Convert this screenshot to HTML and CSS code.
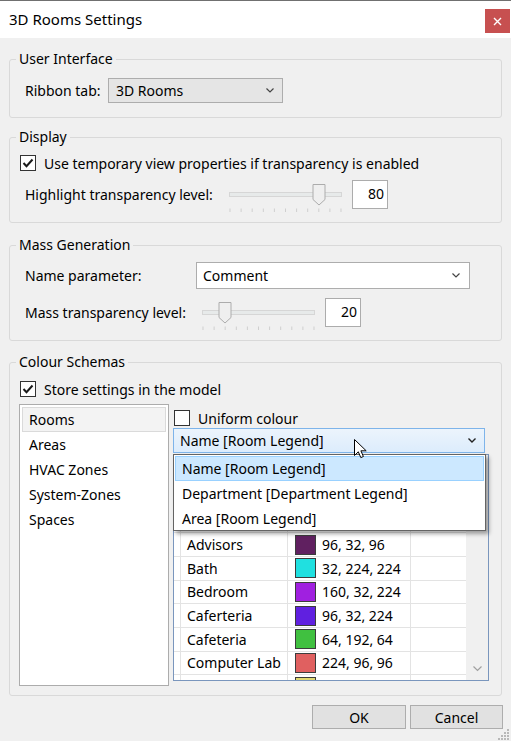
FILE: index.html
```html
<!DOCTYPE html>
<html>
<head>
<meta charset="utf-8">
<title>3D Rooms Settings</title>
<link rel="stylesheet" href="styles.css">
</head>
<body>
<div class="window">
  <div class="titlebar">
    <span class="title">3D Rooms Settings</span>
    <div class="close"><svg width="9" height="9" viewBox="0 0 9 9"><path d="M1 1 L8 8 M8 1 L1 8" stroke="#fff" stroke-width="1.4"/></svg></div>
  </div>
  <div class="content">
    <fieldset class="group g1">
      <legend>User Interface</legend>
      <div class="gbody">
        <div class="row">
          <span class="label w-ribbon">Ribbon tab:</span>
          <div class="combo combo-gray ribbon-combo"><span>3D Rooms</span><svg class="chev" width="8" height="5" viewBox="0 0 8 5"><path d="M0.5 0.5 L4 4 L7.5 0.5" fill="none" stroke="#444" stroke-width="1.2"/></svg></div>
        </div>
      </div>
    </fieldset>

    <fieldset class="group g2">
      <legend>Display</legend>
      <div class="gbody">
        <div class="check-row">
          <span class="checkbox"><svg width="16" height="16" viewBox="0 0 16 16"><path d="M3.5 8 L6.5 11.2 L12.5 4.5" fill="none" stroke="#1a1a1a" stroke-width="2"/></svg></span>
          <span class="check-label">Use temporary view properties if transparency is enabled</span>
        </div>
        <div class="row slider-row">
          <span class="label w-highlight">Highlight transparency level:</span>
          <svg class="slider" width="113" height="33" viewBox="0 0 113 33">
            <rect x="0.5" y="12.5" width="112" height="4" fill="#e7eaea" stroke="#d6d6d6"/>
            <g stroke="#cfcfcf"><path d="M1 28.5V32 M12.1 28.5V32 M23.2 28.5V32 M34.3 28.5V32 M45.4 28.5V32 M56.5 28.5V32 M67.6 28.5V32 M78.7 28.5V32 M89.8 28.5V32 M100.9 28.5V32 M112 28.5V32"/></g>
            <path d="M84 4.5 H96 V19.5 L90 25 L84 19.5 Z" fill="#efefef" stroke="#acacac"/>
          </svg>
          <div class="numbox">80</div>
        </div>
      </div>
    </fieldset>

    <fieldset class="group g3">
      <legend>Mass Generation</legend>
      <div class="gbody">
        <div class="row">
          <span class="label w-name">Name parameter:</span>
          <div class="combo combo-white name-combo"><span>Comment</span><svg class="chev" width="8" height="5" viewBox="0 0 8 5"><path d="M0.5 0.5 L4 4 L7.5 0.5" fill="none" stroke="#444" stroke-width="1.2"/></svg></div>
        </div>
        <div class="row slider-row mass-row">
          <span class="label w-mass">Mass transparency level:</span>
          <svg class="slider" width="113" height="33" viewBox="0 0 113 33">
            <rect x="0.5" y="12.5" width="112" height="4" fill="#e7eaea" stroke="#d6d6d6"/>
            <g stroke="#cfcfcf"><path d="M1 28.5V32 M12.1 28.5V32 M23.2 28.5V32 M34.3 28.5V32 M45.4 28.5V32 M56.5 28.5V32 M67.6 28.5V32 M78.7 28.5V32 M89.8 28.5V32 M100.9 28.5V32 M112 28.5V32"/></g>
            <path d="M17 4.5 H29 V19.5 L23 25 L17 19.5 Z" fill="#efefef" stroke="#acacac"/>
          </svg>
          <div class="numbox">20</div>
        </div>
      </div>
    </fieldset>

    <fieldset class="group g4">
      <legend>Colour Schemas</legend>
      <div class="gbody">
        <div class="check-row">
          <span class="checkbox"><svg width="16" height="16" viewBox="0 0 16 16"><path d="M3.5 8 L6.5 11.2 L12.5 4.5" fill="none" stroke="#1a1a1a" stroke-width="2"/></svg></span>
          <span class="check-label">Store settings in the model</span>
        </div>
        <div class="schemas">
          <ul class="listbox">
            <li class="selected">Rooms</li>
            <li>Areas</li>
            <li>HVAC Zones</li>
            <li>System-Zones</li>
            <li>Spaces</li>
          </ul>
          <div class="panel">
            <div class="check-row uniform-row">
              <span class="checkbox"></span>
              <span class="check-label">Uniform colour</span>
            </div>
            <div class="combo combo-open"><span>Name [Room Legend]</span><svg class="chev" width="8" height="5" viewBox="0 0 8 5"><path d="M0.5 0.5 L4 4 L7.5 0.5" fill="none" stroke="#222" stroke-width="1.4"/></svg></div>
            <div class="grid">
              <div class="table">
                <div class="grow ghead"><span class="c0"></span><span class="c1"></span><span class="c2"></span><span class="c3"></span></div>
                <div class="grow"><span class="c0"></span><span class="c1"></span><span class="c2"></span><span class="c3"></span></div>
                <div class="grow"><span class="c0"></span><span class="c1"></span><span class="c2"></span><span class="c3"></span></div>
                <div class="grow"><span class="c0"></span><span class="c1">Advisors</span><span class="c2"><i class="sw" style="background:rgb(96,32,96)"></i>96, 32, 96</span><span class="c3"></span></div>
                <div class="grow"><span class="c0"></span><span class="c1">Bath</span><span class="c2"><i class="sw" style="background:rgb(32,224,224)"></i>32, 224, 224</span><span class="c3"></span></div>
                <div class="grow"><span class="c0"></span><span class="c1">Bedroom</span><span class="c2"><i class="sw" style="background:rgb(160,32,224)"></i>160, 32, 224</span><span class="c3"></span></div>
                <div class="grow"><span class="c0"></span><span class="c1">Caferteria</span><span class="c2"><i class="sw" style="background:rgb(96,32,224)"></i>96, 32, 224</span><span class="c3"></span></div>
                <div class="grow"><span class="c0"></span><span class="c1">Cafeteria</span><span class="c2"><i class="sw" style="background:rgb(64,192,64)"></i>64, 192, 64</span><span class="c3"></span></div>
                <div class="grow"><span class="c0"></span><span class="c1">Computer Lab</span><span class="c2"><i class="sw" style="background:rgb(224,96,96)"></i>224, 96, 96</span><span class="c3"></span></div>
                <div class="grow"><span class="c0"></span><span class="c1"></span><span class="c2"><i class="sw" style="background:rgb(224,216,112)"></i></span><span class="c3"></span></div>
              </div>
              <div class="vscroll"><svg class="sdown" width="9" height="6" viewBox="0 0 9 6"><path d="M0.5 0.5 L4.5 4.5 L8.5 0.5" fill="none" stroke="#a0a0a0" stroke-width="1.2"/></svg></div>
            </div>
            <ul class="dropdown">
              <li class="hl">Name [Room Legend]</li>
              <li>Department [Department Legend]</li>
              <li>Area [Room Legend]</li>
            </ul>
            <svg class="cursor" width="14" height="20" viewBox="0 0 14 20"><path d="M0.5 0.5 V16.5 L4.3 12.8 L6.8 18.6 L9.4 17.5 L6.9 11.8 L12.2 11.8 Z" fill="#fff" stroke="#000" stroke-width="1" stroke-linejoin="miter"/></svg>
          </div>
        </div>
      </div>
    </fieldset>

    <div class="buttons">
      <div class="btn btn-ok">OK</div>
      <div class="btn btn-cancel">Cancel</div>
    </div>
  </div>
  <svg class="grip" width="12" height="12" viewBox="0 0 12 12"><g fill="#b8b8b8"><rect x="9" y="1" width="2" height="2"/><rect x="6" y="4" width="2" height="2"/><rect x="9" y="4" width="2" height="2"/><rect x="3" y="7" width="2" height="2"/><rect x="6" y="7" width="2" height="2"/><rect x="9" y="7" width="2" height="2"/><rect x="0" y="10" width="2" height="2"/><rect x="3" y="10" width="2" height="2"/><rect x="6" y="10" width="2" height="2"/><rect x="9" y="10" width="2" height="2"/></g></svg>
</div>
</body>
</html>
```
FILE: styles.css
```css
* { box-sizing: border-box; }
html, body { margin: 0; padding: 0; }
body {
  width: 511px;
  height: 741px;
  overflow: hidden;
  background: #f0f0f0;
  font-family: "Noto Sans", "Open Sans", sans-serif;
  font-size: 14px;
  color: #000;
}
.window {
  position: relative;
  width: 511px;
  height: 741px;
  background: #f0f0f0;
}
.titlebar {
  height: 38px;
  background: #fff;
  border-top: 1px solid #707070;
  display: flex;
  align-items: flex-start;
  justify-content: space-between;
}
.title {
  margin-left: 9px;
  margin-top: 8px;
  font-size: 15px;
  line-height: 20px;
}
.close {
  width: 25px;
  height: 24px;
  margin-top: 8px;
  margin-right: 1px;
  background: #c75050;
  display: flex;
  align-items: center;
  justify-content: center;
}
.content {
  padding: 0 9px;
}
.group {
  margin: 0;
  padding: 0;
  border: 1px solid #d9d9d9;
  border-radius: 3px;
  min-width: 0;
}
.group legend {
  margin-left: 6px;
  padding: 0 3px;
  line-height: 20px;
  height: 20px;
}
.gbody {
  padding-left: 10px;
  padding-right: 10px;
}
.g1 { margin-top: 11px; }
.g1 .gbody { padding-top: 9px; padding-bottom: 14px; }
.g2 { margin-top: 9px; }
.g2 .gbody { padding-top: 7px; padding-bottom: 13px; }
.g3 { margin-top: 12px; }
.g3 .gbody { padding-top: 7px; padding-bottom: 13px; }
.g4 { margin-top: 11px; }
.g4 .gbody { padding-top: 8px; padding-bottom: 9px; }

.row {
  display: flex;
  align-items: center;
}
.label {
  margin-left: 5px;
  flex: none;
  white-space: nowrap;
}
.w-ribbon { width: 83px; }
.w-highlight { width: 204px; }
.w-name { width: 171px; }
.w-mass { width: 177px; }

.combo {
  display: flex;
  align-items: center;
  justify-content: space-between;
  border: 1px solid #adadad;
  flex: none;
}
.combo .chev { flex: none; }
.combo-gray {
  width: 175px;
  height: 25px;
  background: #e5e5e5;
  padding: 0 8px 0 7px;
}
.combo-white {
  width: 274px;
  height: 27px;
  background: #fff;
  padding: 0 9px 0 6px;
}
.combo-open {
  width: 312px;
  height: 25px;
  background: linear-gradient(#ecf4fc, #dcecfc);
  border-color: #7eb4ea;
  padding: 0 8px 0 6px;
}

.check-row {
  display: flex;
  align-items: center;
  height: 18px;
}
.checkbox {
  width: 16px;
  height: 16px;
  border: 1px solid #333;
  background: #fff;
  flex: none;
  display: flex;
}
.checkbox svg { margin: -1px; }
.check-label {
  margin-left: 8px;
  white-space: nowrap;
}

.slider-row {
  margin-top: 8px;
  height: 29px;
  align-items: center;
}
.mass-row { margin-top: 9px; }
.slider {
  flex: none;
  align-self: flex-start;
  overflow: visible;
}
.numbox {
  margin-left: 10px;
  width: 36px;
  height: 29px;
  background: #fff;
  border: 1px solid #acacac;
  text-align: right;
  padding-right: 3px;
  line-height: 26px;
  flex: none;
}

.schemas {
  display: flex;
  margin-top: 6px;
  margin-left: -1px;
  gap: 4px;
}
.listbox {
  list-style: none;
  margin: 0;
  padding: 2px;
  width: 150px;
  height: 282px;
  background: #fff;
  border: 1px solid #acacac;
}
.listbox li {
  height: 25px;
  line-height: 23px;
  padding-left: 6px;
  border: 1px solid transparent;
}
.listbox li.selected {
  background: #f3f3f3;
  border-color: #dadada;
}

.panel {
  position: relative;
  width: 316px;
  display: flex;
  flex-direction: column;
}
.uniform-row {
  margin-top: 5px;
  height: 18px;
}
.uniform-row .checkbox { border-color: #333; margin-left: 1px; }
.panel .combo-open { margin-top: 1px; }

.grid {
  margin-top: 1px;
  height: 227px;
  border: 1px solid #7a96bd;
  background: #fff;
  display: flex;
  overflow: hidden;
}
.table {
  width: 292px;
  flex: none;
  overflow: hidden;
}
.grow {
  display: flex;
  height: 23.67px;
  border-bottom: 1px solid #e3e3e3;
}
.ghead { height: 31px; }
.grow span {
  display: flex;
  align-items: center;
  border-right: 1px solid #e3e3e3;
  white-space: nowrap;
}
.c0 { width: 7px; }
.c1 { width: 107px; padding-left: 6px; }
.c2 { width: 123px; padding-left: 7px; }
.c3 { width: 55px; border-right: none !important; }
.sw {
  display: inline-block;
  width: 21px;
  height: 20px;
  border: 1px solid #3c3c3c;
  margin-right: 6px;
  flex: none;
}
.vscroll {
  flex: 1;
  background: #f0f0f0;
  display: flex;
  align-items: flex-end;
  justify-content: center;
  padding-bottom: 8px;
}

.dropdown {
  position: absolute;
  left: 0;
  top: 50px;
  width: 313px;
  height: 77px;
  margin: 0;
  padding: 1px;
  list-style: none;
  background: #fff;
  border: 1px solid #646464;
  box-shadow: 3px 3px 4px rgba(0,0,0,0.35);
}
.dropdown li {
  height: 25px;
  line-height: 23px;
  padding-left: 6px;
  border: 1px solid transparent;
  white-space: nowrap;
}
.dropdown li.hl {
  background: #cce8ff;
  border-color: #99d1ff;
}
.cursor {
  position: absolute;
  left: 181px;
  top: 35px;
}

.buttons {
  display: flex;
  justify-content: flex-end;
  gap: 4px;
  margin-top: 9px;
  margin-right: -1px;
}
.btn {
  height: 24px;
  background: #e1e1e1;
  border: 1px solid #adadad;
  display: flex;
  align-items: center;
  justify-content: center;
}
.btn-ok { width: 94px; }
.btn-cancel { width: 93px; }

.grip {
  position: absolute;
  right: 1px;
  bottom: 1px;
}
```
